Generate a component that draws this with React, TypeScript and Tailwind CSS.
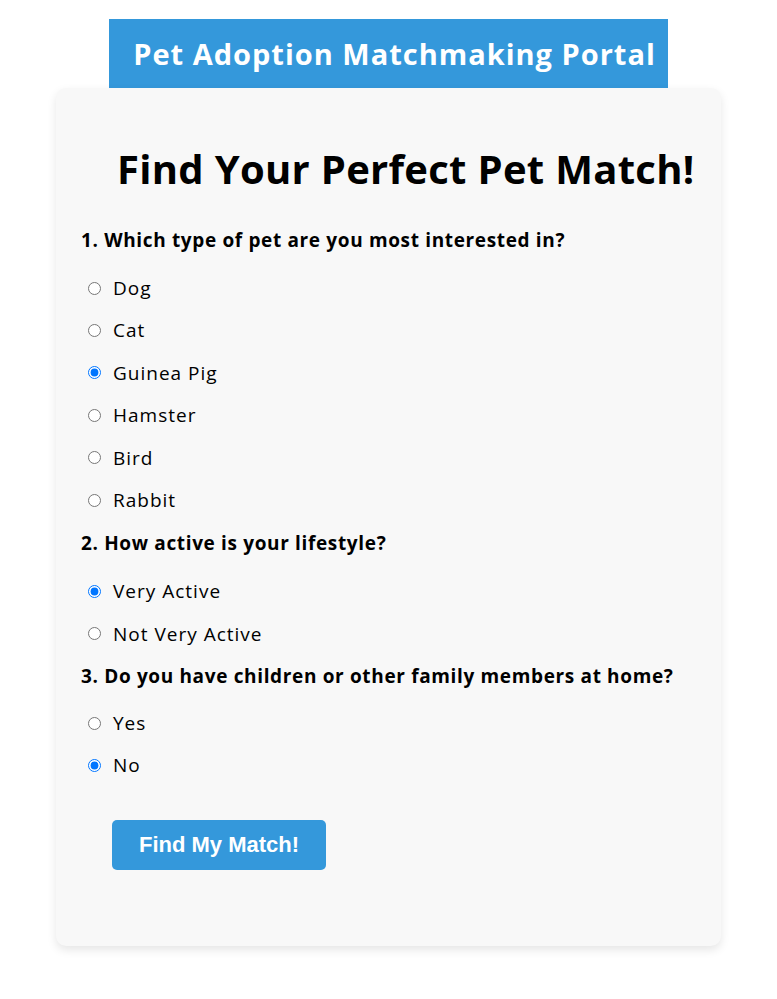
import React from "react";

const groups = [
  {
    q: "1. Which type of pet are you most interested in?",
    name: "pet",
    opts: ["Dog", "Cat", "Guinea Pig", "Hamster", "Bird", "Rabbit"],
    checked: "Guinea Pig",
    gap: "mt-[5px]",
  },
  {
    q: "2. How active is your lifestyle?",
    name: "active",
    opts: ["Very Active", "Not Very Active"],
    checked: "Very Active",
    gap: "mt-[6px]",
  },
  {
    q: "3. Do you have children or other family members at home?",
    name: "kids",
    opts: ["Yes", "No"],
    checked: "No",
    gap: "mt-[4px]",
  },
];

export default function App() {
  return (
    <div className="min-h-screen bg-white flex flex-col items-center pt-[19px] font-['Open_Sans',sans-serif] text-black">
      <h1 className="w-[559px] h-[69px] bg-[#3498db] text-white flex items-center justify-center pl-[12px] text-[29px] tracking-[1px] font-bold">
        Pet Adoption Matchmaking Portal
      </h1>
      <div className="w-[665px] bg-[#f8f8f8] rounded-[10px] shadow-[0_4px_10px_rgba(0,0,0,0.1)] px-[25px] pt-[57px] pb-[76px]">
        <h2 className="pl-[36px] text-[40px] leading-[48px] tracking-[0.3px] font-bold whitespace-nowrap">
          Find Your Perfect Pet Match!
        </h2>
        <div className="mt-[26px]">
          {groups.map((g) => (
            <div key={g.name}>
              <div className="h-[43px] flex items-center text-[19px] tracking-[0.65px] font-bold whitespace-nowrap">
                {g.q}
              </div>
              <div className={g.gap}>
                {g.opts.map((o) => (
                  <label key={o} className="h-[42.4px] flex items-center text-[19px] tracking-[1px]">
                    <input
                      type="radio"
                      name={g.name}
                      defaultChecked={o === g.checked}
                      className="w-[13px] h-[13px] m-0 ml-[7px] mr-[12px]"
                    />
                    <span>{o}</span>
                  </label>
                ))}
              </div>
            </div>
          ))}
        </div>
        <button className="mt-[33px] ml-[31px] w-[214px] h-[50px] bg-[#3498db] text-white rounded-[5px] font-['Liberation_Sans',Arial,sans-serif] font-bold text-[22px]">
          Find My Match!
        </button>
      </div>
    </div>
  );
}
